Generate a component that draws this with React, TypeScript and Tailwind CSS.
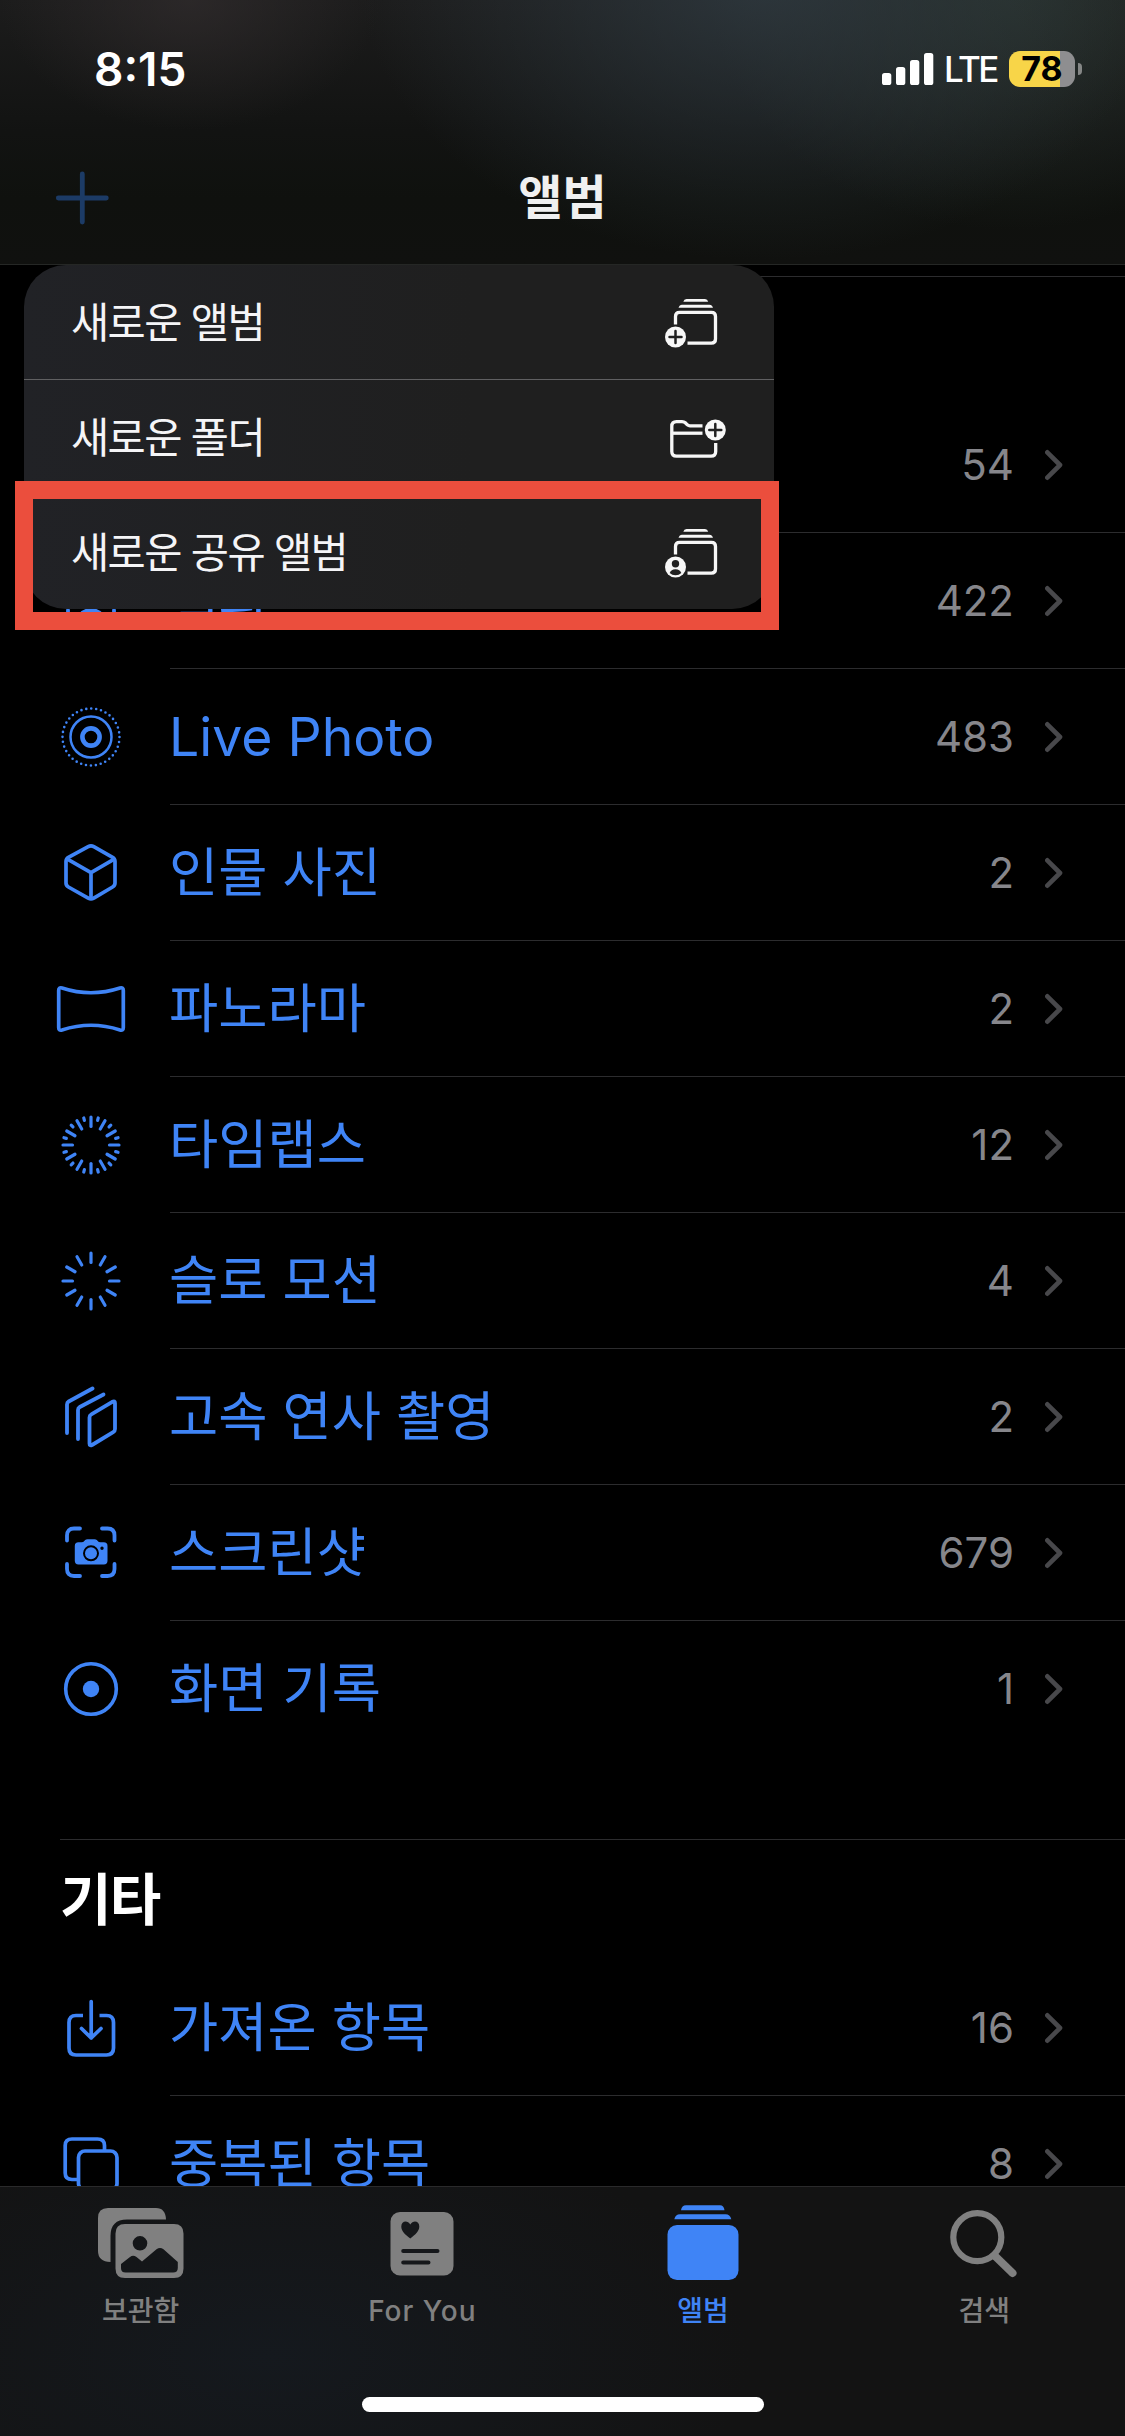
import React from "react";

const font = "font-['Inter','Noto_Sans_CJK_KR',sans-serif]";

function LivePhotoIcon() {
  return (
    <svg width="62" height="62" viewBox="0 0 62 62" fill="none" stroke="currentColor">
      <circle cx="31" cy="31" r="28.5" strokeWidth="2.6" strokeLinecap="round" strokeDasharray="0 4.975" />
      <circle cx="31" cy="31" r="20.5" strokeWidth="2.5" />
      <circle cx="31" cy="31" r="8.6" strokeWidth="4.6" />
    </svg>
  );
}

function CubeIcon() {
  return (
    <svg width="62" height="62" viewBox="0 0 62 62" fill="none" stroke="currentColor" strokeWidth="3.7" strokeLinejoin="round">
      <path d="M28.2 4.6Q31 3 33.8 4.6L52.6 15.4Q55 16.8 55 19.6V41Q55 43.6 52.6 45L33.8 56.2Q31 57.6 28.2 56.2L8.4 45Q6 43.6 6 41V19.6Q6 16.8 8.4 15.4Z" />
      <path d="M7 16.8L31 30.6L54.6 16.8M31 30.6V57" />
    </svg>
  );
}

function PanoramaIcon() {
  return (
    <svg width="70" height="48" viewBox="0 0 70 48" fill="none" stroke="currentColor" strokeWidth="3.7" strokeLinejoin="round">
      <path d="M2.7 5.6Q2.7 2 6 3Q35 12.5 64 3Q67.3 2 67.3 5.6V42.4Q67.3 46 64 45Q35 35.5 6 45Q2.7 46 2.7 42.4Z" />
    </svg>
  );
}

function Rays({ minor }: { minor: boolean }) {
  const majors = Array.from({ length: 12 }, (_, i) => i * 30);
  const minors = minor ? majors.map((a) => a + 15) : [];
  return (
    <svg width="62" height="62" viewBox="0 0 62 62" stroke="currentColor" strokeWidth="3.2" strokeLinecap="round">
      {majors.map((a) => (
        <line key={a} x1="31" y1="3" x2="31" y2="12.5" transform={`rotate(${a} 31 31)`} />
      ))}
      {minors.map((a) => (
        <line key={a} x1="31" y1="3" x2="31" y2="5.5" transform={`rotate(${a} 31 31)`} />
      ))}
    </svg>
  );
}

function BurstIcon() {
  return (
    <svg width="62" height="62" viewBox="0 0 62 62" fill="none" stroke="currentColor" strokeWidth="3.8" strokeLinejoin="round" strokeLinecap="round">
      <path d="M7 47V18.5Q7 16.500 8.700 15.500L32.500 2.500" />
      <path d="M18 53V24Q18 22 19.800 21L43.500 8.500" />
      <path d="M29.500 31.500Q29.500 29.300 31.300 28.300L52.300 15.800Q55 14.500 55 17.300V43Q55 45.100 53.200 46.200L32 59Q29.500 60.200 29.500 57.500Z" />
    </svg>
  );
}

function ScreenshotIcon() {
  return (
    <svg width="62" height="62" viewBox="0 0 62 62" fill="none" stroke="currentColor" strokeWidth="3.8" strokeLinecap="round">
      <path d="M7 18.500V13.500Q7 6.500 14 6.500H20M42 6.500H47.500Q54.500 6.500 54.500 13.500V18.500M54.500 42V47Q54.500 54 47.500 54H42M20 54H14Q7 54 7 47V42" />
      <path
        stroke="none"
        fill="currentColor"
        fillRule="evenodd"
        d="M18.500 20.300H21.500Q23.300 20.300 24.500 18.800L25.200 18.100Q26 17.300 27.500 17.300H34.500Q36 17.300 36.800 18.100L37.500 18.800Q38.700 20.300 40.500 20.300H43.800Q47.500 20.300 47.500 24V38.800Q47.500 42.500 43.800 42.500H18.500Q14.800 42.500 14.800 38.800V24Q14.800 20.300 18.500 20.300ZM31 23.300A8 8 0 1 0 31 39.300A8 8 0 1 0 31 23.300ZM42 24.500A1.700 1.700 0 1 0 42 27.900A1.700 1.700 0 1 0 42 24.500Z"
      />
      <circle cx="31" cy="31.300" r="6" stroke="none" fill="currentColor" />
    </svg>
  );
}

function RecordIcon() {
  return (
    <svg width="62" height="62" viewBox="0 0 62 62" fill="none" stroke="currentColor" strokeWidth="3.6">
      <circle cx="31" cy="31" r="25.3" />
      <circle cx="31" cy="31" r="8.2" fill="currentColor" stroke="none" />
    </svg>
  );
}

function ImportIcon() {
  return (
    <svg width="62" height="62" viewBox="0 0 62 62" fill="none" stroke="currentColor" strokeWidth="3.7" strokeLinejoin="round">
      <path d="M23 18.500H16Q9 18.500 9 25.500V51Q9 58 16 58H46.500Q53.500 58 53.500 51V25.500Q53.500 18.500 46.500 18.500H39.500" />
      <path strokeLinecap="round" d="M31.200 4.500V41M21.500 31.500L31.200 41L41 31.500" />
    </svg>
  );
}

function DuplicateIcon() {
  return (
    <svg width="62" height="62" viewBox="0 0 62 62" fill="none" stroke="currentColor" strokeWidth="3.7">
      <path d="M18.500 46.500H12Q5.200 46.500 5.200 40V12.500Q5.200 6 12 6H37.500Q44.500 6 44.500 12.500V18" />
      <rect x="18.500" y="18" width="38.500" height="39" rx="6.500" />
    </svg>
  );
}

function SelfieIcon() {
  return (
    <svg width="62" height="62" viewBox="0 0 62 62" fill="none" stroke="currentColor" strokeWidth="3.8" strokeLinecap="round">
      <path d="M8 18V14Q8 7 15 7H20M42 7H47Q54 7 54 14V18M54 40V47Q54 54 47 54H42M20 54H15Q8 54 8 47V40" />
      <circle cx="31" cy="26" r="8" fill="currentColor" stroke="none" />
      <path d="M17 48Q19 38.500 31 38.500T45 48Z" fill="currentColor" stroke="none" />
    </svg>
  );
}

function Stack() {
  return (
    <>
      <path fill="currentColor" d="M18.300 2.800Q19 0 21.500 0H40Q42.500 0 43.200 2.800Z" />
      <path fill="currentColor" d="M13.500 8.800Q14.500 5.800 17 5.800H44.500Q47 5.800 48 8.800Z" />
      <path fill="none" stroke="currentColor" strokeWidth="3.300" d="M10.500 25.500V17.500Q10.500 13.400 14.600 13.400H46.400Q50.500 13.400 50.500 17.500V40Q50.500 44.100 46.400 44.100H22.500" />
    </>
  );
}

function NewAlbumIcon() {
  return (
    <svg width="53" height="49" viewBox="0 0 53 49">
      <Stack />
      <circle cx="10.500" cy="38" r="10.500" fill="currentColor" />
      <path d="M10.500 32V44M4.500 38H16.500" stroke="#202020" strokeWidth="2.500" strokeLinecap="round" />
    </svg>
  );
}

function SharedAlbumIcon() {
  return (
    <svg width="53" height="49" viewBox="0 0 53 49">
      <Stack />
      <circle cx="10.500" cy="38" r="10.500" fill="currentColor" />
      <circle cx="10.500" cy="34.800" r="3.700" fill="#202020" />
      <path d="M4.700 44Q6 40.200 10.500 40.200T16.300 44Q14 46.300 10.500 46.300T4.700 44Z" fill="#202020" />
    </svg>
  );
}

function NewFolderIcon() {
  return (
    <svg width="56" height="39" viewBox="0 0 56 39" fill="none" stroke="currentColor" strokeWidth="3.300">
      <path d="M32.500 6.800H20Q18.500 6.800 17.300 5.800L15.300 3.800Q14 2.600 12 2.600H6.500Q1.800 2.600 1.800 7.300V32.500Q1.800 37.200 6.500 37.200H41Q45.700 37.200 45.700 32.500V24" />
      <path d="M2 14.200H32.500" />
      <circle cx="45.300" cy="11" r="10.500" fill="currentColor" stroke="none" />
      <path d="M45.300 5V17M39.300 11H51.300" stroke="#202020" strokeWidth="2.500" strokeLinecap="round" />
    </svg>
  );
}

function Chevron() {
  return (
    <svg width="20" height="34" viewBox="0 0 20 34" fill="none" stroke="#48484b" strokeWidth="4.600" strokeLinecap="round" strokeLinejoin="round">
      <path d="M2.300 4.300L15 17L2.300 29.700" />
    </svg>
  );
}

type RowData = { id: string; icon?: React.ReactNode; label?: string; count: string; last?: boolean };

function Row({ icon, label, count, last }: RowData) {
  return (
    <div className="flex h-[136px]">
      <div className="flex w-[170px] items-center justify-center pl-[11px] text-[#3f84f6]">{icon}</div>
      <div className={"flex flex-1 items-center pr-[60px] " + (last ? "" : "border-b border-[#2c2c2e]")}>
        <span className="-ml-px flex-1 whitespace-nowrap text-[53.500px] leading-[64px] text-[#3f84f6]">{label}</span>
        <span className="mr-[31px] text-[42px] leading-[50px] text-[#86868b]">{count}</span>
        <Chevron />
      </div>
    </div>
  );
}

const mediaRows: RowData[] = [
  { id: "videos", count: "54" },
  { id: "selfies", icon: <SelfieIcon />, label: "셀피", count: "422" },
  { id: "live", icon: <LivePhotoIcon />, label: "Live Photo", count: "483" },
  { id: "portrait", icon: <CubeIcon />, label: "인물 사진", count: "2" },
  { id: "panorama", icon: <PanoramaIcon />, label: "파노라마", count: "2" },
  { id: "timelapse", icon: <Rays minor />, label: "타임랩스", count: "12" },
  { id: "slomo", icon: <Rays minor={false} />, label: "슬로 모션", count: "4" },
  { id: "burst", icon: <BurstIcon />, label: "고속 연사 촬영", count: "2" },
  { id: "screenshots", icon: <ScreenshotIcon />, label: "스크린샷", count: "679" },
  { id: "recordings", icon: <RecordIcon />, label: "화면 기록", count: "1", last: true },
];

const otherRows: RowData[] = [
  { id: "imports", icon: <ImportIcon />, label: "가져온 항목", count: "16" },
  { id: "duplicates", icon: <DuplicateIcon />, label: "중복된 항목", count: "8" },
];

function StatusBar() {
  return (
    <div className="flex h-[138px] items-center justify-between pr-[43px] pl-[94px]">
      <span className="text-[46px] font-semibold leading-[50px] text-white">8:15</span>
      <div className="flex items-center">
        <svg width="52" height="34" viewBox="0 0 52 34" fill="white">
          <rect x="0" y="21" width="9.300" height="12" rx="2.600" />
          <rect x="14" y="15" width="9.300" height="18" rx="2.600" />
          <rect x="28" y="8" width="9.300" height="25" rx="2.600" />
          <rect x="42" y="1" width="9.300" height="32" rx="2.600" />
        </svg>
        <span className="ml-[10px] w-[54px] text-[35px] font-medium leading-[40px] tracking-[-2.500px] text-white">LTE</span>
        <div className="ml-[11px] flex h-[36px] w-[66px] items-center justify-center rounded-[11px] bg-[linear-gradient(90deg,#f8d548_51px,#8e8e90_51px)]">
          <span className="text-[34px] font-bold leading-[36px] text-black">78</span>
        </div>
        <div className="ml-[3px] h-[12px] w-[4px] rounded-r-full bg-[#858786]" />
      </div>
    </div>
  );
}

function MenuItem({ label, icon, pr }: { label: string; icon: React.ReactNode; pr: string }) {
  return (
    <div className={"flex flex-1 items-center justify-between pt-[2px] pl-[47px] " + pr}>
      <span className="text-[41.500px] leading-[50px] tracking-[-1.600px] text-[#f5f5f7]">{label}</span>
      <span className="text-[#f7f7f7]">{icon}</span>
    </div>
  );
}

function Tab({ label, icon, active }: { label: string; icon: React.ReactNode; active?: boolean }) {
  return (
    <div className={"flex flex-1 flex-col items-center " + (active ? "text-[#3f84f6]" : "text-[#808080]")}>
      <div className="flex h-[94px] items-start">{icon}</div>
      <span className={"mt-[10px] text-[28px] font-medium leading-[40px] " + (label === "For You" ? "pl-px tracking-[1px]" : "")}>{label}</span>
    </div>
  );
}

function LibraryTabIcon() {
  return (
    <svg className="mt-[21px]" width="86" height="71" viewBox="0 0 86 71" fill="currentColor">
      <path d="M10 0H58Q67.500 0 68 11.500H29Q12.500 11.500 12.500 28V54Q0 53.500 0 43V10Q0 0 10 0Z" />
      <path
        fillRule="evenodd"
        d="M27 16H76Q85.500 16 85.500 25.500V60.500Q85.500 70 76 70H27Q17.500 70 17.500 60.500V25.500Q17.500 16 27 16ZM42 28A7.300 7.300 0 1 0 42 42.600A7.300 7.300 0 1 0 42 28ZM23 56V60Q23 64.500 27.500 64.500H75Q79.800 64.500 79.800 60V54L65.500 41.300Q62 38.500 58.500 41.300L44 53.500L38.500 49Q35 46.300 32 49Z"
      />
    </svg>
  );
}

function ForYouTabIcon() {
  return (
    <svg className="mt-[25px]" width="64" height="64" viewBox="0 0 64 64">
      <rect x="0.500" y="0" width="63" height="63.500" rx="9.500" fill="currentColor" />
      <path d="M20.300 26.500C15 22.500 11.300 19 11.300 14.500C11.300 8.500 17.800 8 20.300 12.500C22.800 8 29.300 8.500 29.300 14.500C29.300 19 25.500 22.500 20.300 26.500Z" fill="#16181b" />
      <path d="M13.200 39H47.500M13.200 50.500H38.500" stroke="#16181b" strokeWidth="4" strokeLinecap="round" />
    </svg>
  );
}

function AlbumsTabIcon() {
  return (
    <svg className="mt-[18px]" width="72" height="76" viewBox="0 0 72 76" fill="currentColor">
      <path d="M14 5.300Q14.800 0.300 19 0.300H53Q56.800 0.300 57.500 5.300Z" />
      <path d="M7.300 14.300Q8.500 9.300 13 9.300H58.500Q63 9.300 64.300 14.300Z" />
      <rect x="0.500" y="20" width="71" height="55" rx="9.500" />
    </svg>
  );
}

function SearchTabIcon() {
  return (
    <svg className="mt-[23px]" width="68" height="68" viewBox="0 0 68 68" fill="none" stroke="currentColor">
      <circle cx="27.300" cy="27.200" r="24" strokeWidth="6.200" />
      <path d="M45.500 46.500L62.500 63" strokeWidth="8" strokeLinecap="round" />
    </svg>
  );
}

export default function App() {
  return (
    <div className={"relative flex h-[2436px] w-[1125px] flex-col overflow-hidden bg-black " + font}>
      <header className="h-[265px] shrink-0 border-b border-[#252725] bg-[radial-gradient(ellipse_190px_130px_at_190px_0px,#322d2eb0,transparent),radial-gradient(ellipse_400px_280px_at_760px_-20px,#303b42d0,transparent),radial-gradient(ellipse_300px_240px_at_1010px_-10px,#2a3530d0,transparent),linear-gradient(180deg,#1c1c1c_0%,#121312_50%,#0f110e_75%,#10110f_100%)]">
        <StatusBar />
        <div className="flex h-[120px] items-center px-[54px]">
          <div className="flex flex-1">
            <svg width="56" height="56" viewBox="0 0 56 56" stroke="#1c3b66" strokeWidth="4.800" strokeLinecap="round">
              <path d="M28.300 4V52M4.300 28H52.300" />
            </svg>
          </div>
          <h1 className="text-[48px] font-bold leading-[60px] text-[#f0f0f0]">앨범</h1>
          <div className="flex-1" />
        </div>
      </header>

      <main className="flex min-h-0 flex-1 flex-col overflow-hidden">
        <div className="mt-[11px] ml-[60px] h-[121px] shrink-0 border-t border-[#2c2c2e]" />
        <section className="shrink-0">
          {mediaRows.map((r) => (
            <Row key={r.id} {...r} />
          ))}
        </section>
        <section className="mt-[82px] shrink-0">
          <div className="ml-[60px] flex h-[121px] items-center border-t border-[#2c2c2e]">
            <h2 className="text-[56px] font-bold leading-[70px] tracking-[-1.800px] text-white">기타</h2>
          </div>
          {otherRows.map((r) => (
            <Row key={r.id} {...r} />
          ))}
        </section>
      </main>

      <footer className="h-[250px] shrink-0 border-t border-[#2a2a2b] bg-[radial-gradient(ellipse_480px_240px_at_270px_170px,#15191e,transparent),linear-gradient(#131313,#131313)]">
        <nav className="flex">
          <Tab label="보관함" icon={<LibraryTabIcon />} />
          <Tab label="For You" icon={<ForYouTabIcon />} />
          <Tab label="앨범" icon={<AlbumsTabIcon />} active />
          <Tab label="검색" icon={<SearchTabIcon />} />
        </nav>
        <div className="mx-auto mt-[66px] h-[15px] w-[402px] rounded-full bg-white" />
      </footer>

      <div className="absolute top-[265px] left-[24px] flex h-[344px] w-[750px] flex-col divide-y divide-[#606062] rounded-[42px] bg-[linear-gradient(90deg,#212226,#1f1f1f_60%)]">
        <MenuItem label="새로운 앨범" icon={<NewAlbumIcon />} pr="pr-[56px]" />
        <MenuItem label="새로운 폴더" icon={<NewFolderIcon />} pr="pr-[48px]" />
        <MenuItem label="새로운 공유 앨범" icon={<SharedAlbumIcon />} pr="pr-[56px]" />
      </div>
      <div className="absolute top-[481px] left-[15px] h-[149px] w-[764px] border-[18px] border-[#eb4e3d]" />
    </div>
  );
}
